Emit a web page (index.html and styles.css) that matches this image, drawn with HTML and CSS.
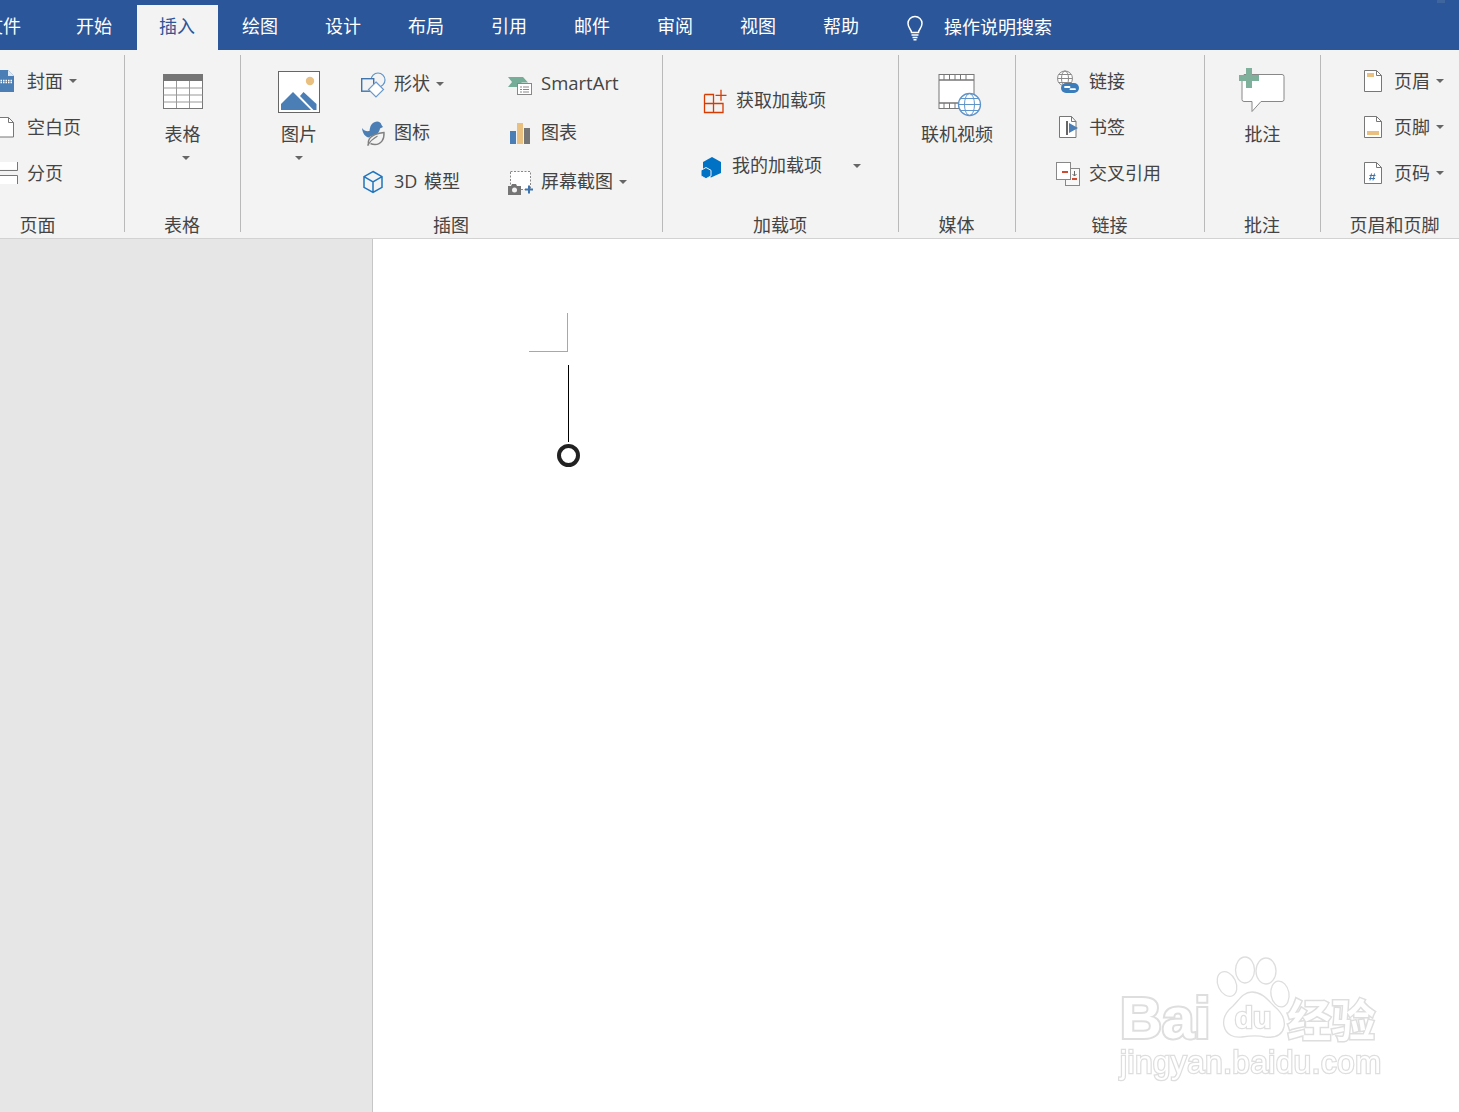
FILE: index.html
```html
<!DOCTYPE html>
<html lang="zh-CN">
<head>
<meta charset="utf-8">
<title>Word 插入</title>
<link rel="stylesheet" href="styles.css">
</head>
<body>
<div class="app">
  <nav class="tabs">
    <span class="tab tab-file">文件</span>
    <span class="tab">开始</span>
    <span class="tab tab-active">插入</span>
    <span class="tab">绘图</span>
    <span class="tab">设计</span>
    <span class="tab">布局</span>
    <span class="tab">引用</span>
    <span class="tab">邮件</span>
    <span class="tab">审阅</span>
    <span class="tab">视图</span>
    <span class="tab">帮助</span>
    <span class="search">
      <svg class="bulb" viewBox="0 0 20 26"><path d="M6.500 17.500c0-3-3.500-4.500-3.500-9a7 7 0 0 1 14 0c0 4.500-3.500 6-3.500 9z" fill="none" stroke="#fff" stroke-width="1.500"/><path d="M6.500 20h7M7.500 22.500h5M8.500 24.800h3" stroke="#fff" stroke-width="1.500" fill="none"/></svg>
      <span class="search-text">操作说明搜索</span>
    </span>
    <i class="corner-dot"></i>
  </nav>

  <div class="ribbon">
    <section class="group g-pages">
      <div class="body stack">
        <div class="item"><svg class="ico ico-28" viewBox="0 0 28 24"><path d="M2 1h16l6 6v16H2z" fill="#4a7eb5"/><path d="M18 1l6 6h-6z" fill="#dfe9f3"/><path d="M8 11.500h14M8 13.500h14" stroke="#fff" stroke-width="1.500" stroke-dasharray="1.500 1"/></svg><span>封面</span><i class="caret caret-inline"></i></div>
        <div class="item"><svg class="ico ico-28" viewBox="0 0 28 24"><path d="M2 2.500h16.500l5 5v14.500H2z" fill="#fff" stroke="#777"/><path d="M18.500 2.500v5h5" fill="none" stroke="#777"/></svg><span>空白页</span></div>
        <div class="item"><svg class="ico ico-28" viewBox="0 0 28 24"><path d="M0 1h27v7.500H0zM0 15h27v8H0z" fill="#fff"/><path d="M0 9.500h27.500V1M0 14.500h27.500V23" fill="none" stroke="#777"/></svg><span>分页</span></div>
      </div>
      <div class="label">页面</div>
    </section>

    <section class="group g-table">
      <div class="body center">
        <div class="large">
          <svg class="ico-large" viewBox="0 0 42 42"><rect x="1.500" y="3.500" width="39" height="34" fill="#fff" stroke="#777"/><rect x="1" y="3" width="40" height="7" fill="#757575"/><path d="M1.500 17h39M1.500 24h39M1.500 31h39M14.500 10v27M27.500 10v27" stroke="#999" fill="none"/></svg>
          <span>表格</span><i class="caret caret-table"></i>
        </div>
      </div>
      <div class="label">表格</div>
    </section>

    <section class="group g-illus">
      <div class="body row">
        <div class="large large-pic">
          <svg class="ico-large" viewBox="0 0 42 42"><rect x="0.500" y="0.500" width="41" height="41" fill="#fff" stroke="#666"/><circle cx="32" cy="10" r="4.200" fill="#e9c07f"/><path d="M3 39v-6l12-12 11 11 7 7z" fill="#4a7eb5"/><path d="M22 25l3.500-4 13 12v6h-3z" fill="#4a7eb5"/></svg>
          <span>图片</span><i class="caret"></i>
        </div>
        <div class="col col-a">
          <div class="item item-tall"><svg class="ico" viewBox="0 0 24 24"><circle cx="17" cy="8" r="7" fill="#f3f3f3" stroke="#5f94c9" stroke-width="1.200"/><rect x="0.700" y="6.700" width="12" height="12.500" fill="#f3f3f3" stroke="#3f74ad" stroke-width="1.400"/><path d="M15 10l7.500 7.500L15 25l-7.500-7.500z" fill="#fff" stroke="#6a9acb" stroke-width="1.200"/></svg><span>形状</span><i class="caret caret-inline"></i></div>
          <div class="item item-tall"><svg class="ico" viewBox="0 0 24 24"><path d="M1 7c2 3 5 3.500 7.500 3 .5-4 1.500-9 7.500-9.500 2.500 0 4 1.500 4.500 3.500l1.500 2-3 1.500c-.5 4-4 7.500-9 7.500l-2 1.500C4 16 1.500 12 1 7z" fill="#4a7eb5"/><path d="M7.500 24.500c-1-6 1-11 15.500-13 .5 7-3 12-9 12-2 0-3.500-.5-4.500-1" fill="#f3f3f3" stroke="#808080" stroke-width="1.400"/><path d="M6.500 24.500c2.500-4 5.500-7 10-9.500" fill="none" stroke="#808080" stroke-width="1.200"/></svg><span>图标</span></div>
          <div class="item item-tall"><svg class="ico" viewBox="0 0 24 24"><path d="M12 1.500l9 5.200v10.600l-9 5.200-9-5.200V6.700zM3 6.700l9 5.300 9-5.300M12 12v10.500" fill="none" stroke="#1f75bf" stroke-width="1.500"/></svg><span class="spaced">3D 模型</span></div>
        </div>
        <div class="col col-b">
          <div class="item item-tall"><svg class="ico ico-b" viewBox="0 0 25 24"><path d="M1 5h15l5 5.500h-6.500V15H1l4-5z" fill="#75ad98"/><rect x="10.500" y="11.500" width="14" height="11" fill="#fff" stroke="#888"/><path d="M13 15h2M16 15h6M13 17.500h2M16 17.500h6M13 20h2M16 20h6" stroke="#888"/></svg><span class="latin">SmartArt</span></div>
          <div class="item item-tall"><svg class="ico ico-b" viewBox="0 0 25 24"><rect x="3" y="10" width="6" height="13" fill="#4a7eb5"/><rect x="10" y="2" width="6" height="21" fill="#e9c07f"/><rect x="17" y="7" width="6" height="16" fill="#757575"/></svg><span>图表</span></div>
          <div class="item item-tall"><svg class="ico ico-b" viewBox="0 0 25 24"><rect x="3.500" y="1.500" width="20" height="18" fill="#fff" stroke="#888" stroke-dasharray="2 1.500"/><path d="M1 16h3l1-2h4l1 2h4v9H1z" fill="#757575"/><circle cx="7.500" cy="20" r="2.500" fill="#f3f3f3"/><path d="M22 15.500v8M18 19.500h8" stroke="#3f74ad" stroke-width="2"/></svg><span>屏幕截图</span><i class="caret caret-inline"></i></div>
        </div>
      </div>
      <div class="label">插图</div>
    </section>

    <section class="group g-addins">
      <div class="body stack">
        <div class="item item-addin item-get"><svg class="ico" viewBox="0 0 24 24"><path d="M1.500 5.500h9v9M1.500 5.500v18h18.500v-9H1.500M10.500 14.500v9M18 .8v11M12.500 6.300h11" fill="none" stroke="#d83b01" stroke-width="1.300"/></svg><span>获取加载项</span></div>
        <div class="item item-addin item-mine"><svg class="ico" viewBox="0 0 24 24"><path d="M12 3l9 5v11l-10 4.500-8-4.500V8z" fill="#0072c6"/><path d="M6 13.500l5 2.800v5.600L6 24.700 1 21.900v-5.600z" fill="#0072c6" stroke="#f3f3f3"/></svg><span>我的加载项</span><i class="caret caret-far"></i></div>
      </div>
      <div class="label">加载项</div>
    </section>

    <section class="group g-media">
      <div class="body center">
        <div class="large">
          <svg class="ico-large ico-wide" viewBox="0 0 50 42"><rect x="7" y="3.500" width="35" height="34" fill="#fff" stroke="#777"/><path d="M7 9h35M7 32h35" stroke="#777" stroke-width="1.500"/><path d="M12 3.500V9M17.500 3.500V9M23 3.500V9M28.500 3.500V9M34 3.500V9M12 32v5.500M17.500 32v5.500M23 32v5.500M28.500 32v5.500" stroke="#777"/><circle cx="37.500" cy="33.500" r="11" fill="#fff" stroke="#5f94c9" stroke-width="1.300"/><ellipse cx="37.500" cy="33.500" rx="5" ry="11" fill="none" stroke="#5f94c9"/><path d="M26.500 33.500h22M28 27.500h19M28 39.500h19" stroke="#5f94c9"/></svg>
          <span>联机视频</span>
        </div>
      </div>
      <div class="label">媒体</div>
    </section>

    <section class="group g-links">
      <div class="body stack">
        <div class="item"><svg class="ico" viewBox="0 0 24 24"><circle cx="9" cy="9.500" r="7.500" fill="#fff" stroke="#8a8a8a"/><ellipse cx="9" cy="9.500" rx="3.500" ry="7.500" fill="none" stroke="#8a8a8a"/><path d="M1.500 9.500h15M2.500 5.500h13M2.500 13.500h13" stroke="#8a8a8a"/><rect x="5" y="14" width="18" height="10" rx="5" fill="#3b7dbb"/><path d="M9 18h4.500M14.500 20.200H19" fill="none" stroke="#fff" stroke-width="1.800" stroke-linecap="round"/></svg><span>链接</span></div>
        <div class="item"><svg class="ico" viewBox="0 0 24 24"><path d="M3.500 1.500h12l4.500 5v16H3.500z" fill="#fff" stroke="#777"/><path d="M15.500 1.500v5h4.500" fill="none" stroke="#777"/><rect x="10" y="6" width="2" height="14" fill="#666"/><path d="M13 8l9 5-9 5z" fill="#4a7eb5"/></svg><span>书签</span></div>
        <div class="item"><svg class="ico" viewBox="0 0 24 24"><rect x="9.500" y="7.500" width="14" height="17" fill="#f8f8f8" stroke="#888"/><rect x="0.500" y="1.500" width="14" height="17" fill="#fff" stroke="#888"/><rect x="6" y="10" width="6" height="2" fill="#d1492e"/><rect x="16" y="17" width="5" height="2" fill="#d1492e"/><path d="M18.500 10v5M16.500 13l2 2 2-2" fill="none" stroke="#666"/></svg><span>交叉引用</span></div>
      </div>
      <div class="label">链接</div>
    </section>

    <section class="group g-comment">
      <div class="body center">
        <div class="large">
          <svg class="ico-large ico-wide" viewBox="0 0 50 42"><path d="M6 3.500h38a2 2 0 0 1 2 2v23a2 2 0 0 1-2 2H23l-9 10v-10H6a2 2 0 0 1-2-2v-23z" fill="#fff" stroke="#888"/><path d="M8-3h6v7h7v6h-7v7H8v-7H1V4h7z" fill="#7fb09b"/></svg>
          <span>批注</span>
        </div>
      </div>
      <div class="label">批注</div>
    </section>

    <section class="group g-header">
      <div class="body stack">
        <div class="item"><svg class="ico ico-page" viewBox="0 0 20 24"><path d="M1.500 1.500h12l5 5v16h-17z" fill="#fff" stroke="#777"/><path d="M13.500 1.500v5h5" fill="none" stroke="#777"/><rect x="4" y="4" width="7" height="4" fill="#e9c07f"/></svg><span>页眉</span><i class="caret caret-inline"></i></div>
        <div class="item"><svg class="ico ico-page" viewBox="0 0 20 24"><path d="M1.500 1.500h12l5 5v16h-17z" fill="#fff" stroke="#777"/><path d="M13.500 1.500v5h5" fill="none" stroke="#777"/><rect x="4" y="16" width="12" height="4" fill="#e9c07f"/></svg><span>页脚</span><i class="caret caret-inline"></i></div>
        <div class="item"><svg class="ico ico-page" viewBox="0 0 20 24"><path d="M1.500 1.500h12l5 5v16h-17z" fill="#fff" stroke="#777"/><path d="M13.500 1.500v5h5" fill="none" stroke="#777"/><path d="M8.500 12.500l-1.500 7M11.500 12.500l-1.500 7M6.500 14.500h6M6 17.500h6" stroke="#3f74ad" fill="none"/></svg><span>页码</span><i class="caret caret-inline"></i></div>
      </div>
      <div class="label">页眉和页脚</div>
    </section>
  </div>

  <main class="workspace">
    <aside class="side"></aside>
    <div class="page">
      <div class="margin-mark"></div>
      <div class="stem"></div>
      <div class="handle"></div>
    </div>
    <div class="watermark">
      <div class="wm-top">
        <span class="wm-bai">Bai</span>
        <svg class="wm-paw" viewBox="0 0 70 86">
          <g fill="#fff" stroke="#dedede" stroke-width="1.300">
            <ellipse cx="11" cy="27" rx="9" ry="13" transform="rotate(-25 11 27)"/>
            <ellipse cx="29" cy="13" rx="9.500" ry="13"/>
            <ellipse cx="50" cy="14" rx="10" ry="13"/>
            <ellipse cx="64" cy="37" rx="9" ry="13" transform="rotate(-10 64 37)"/>
            <path d="M36 35c-9 0-13 8-19 14-6 5-11 11-9 20 2 9 10 12 18 11 7-1 15-2 23 0 9 1 17-1 19-10 2-9-4-16-10-21-6-6-12-14-22-14z"/>
          </g>
          <text x="37" y="71" text-anchor="middle" class="wm-du">du</text>
        </svg>
        <span class="wm-jy">经验</span>
      </div>
      <div class="wm-url">jingyan.baidu.com</div>
    </div>
  </main>
</div>
</body>
</html>
```
FILE: styles.css
```css
* { box-sizing: border-box; }
html, body { margin: 0; padding: 0; height: 100%; overflow: hidden; background: #fff; }
body { font-family: "Noto Sans CJK SC", "Noto Sans", sans-serif; font-size: 18px; color: #444; }
.app { display: flex; flex-direction: column; height: 1112px; width: 1459px; overflow: hidden; }

.tabs { position: relative; display: flex; align-items: flex-end; gap: 2px; height: 50px; margin-left: -37.5px; background: #2b579a; color: #fff; flex: none; width: 1497px; }
.tab { display: flex; align-items: center; justify-content: center; width: 81px; height: 45px; padding-bottom: 4px; line-height: 41px; }
.tab-file { margin-right: 8px; }
.tab-active { background: #f3f3f3; color: #2b579a; }
.search { display: flex; align-items: center; height: 45px; margin-left: 21.5px; gap: 19px; }
.search-text { margin-bottom: 4px; }
.bulb { width: 20px; height: 26px; flex: none; }
.corner-dot { position: absolute; right: 15px; top: 0; width: 8px; height: 3px; background: #3f659e; }

.ribbon { display: flex; height: 189px; flex: none; padding-top: 5px; background: #f3f3f3; border-bottom: 1px solid #d2d2d2; overflow: hidden; }
.group { display: flex; flex-direction: column; flex: none; height: 177px; border-right: 1px solid #b9b9b9; }
.body { flex: 1; min-height: 0; }
.label { height: 20px; margin-bottom: -13px; padding-right: 1px; line-height: 20px; text-align: center; transform: translateY(-11px); color: #444; white-space: nowrap; }

.g-pages { width: 173px; margin-left: -48px; }
.g-table { width: 116px; }
.g-illus { width: 422px; }
.g-addins { width: 236px; }
.g-media { width: 117px; }
.g-links { width: 189px; }
.g-comment { width: 116px; }
.g-header { width: 148px; border-right: 0; }

.stack { display: flex; flex-direction: column; padding-top: 3px; }
.center { display: flex; justify-content: center; }
.row { display: flex; }
.col { display: flex; flex-direction: column; padding-top: 4px; }

.item { display: flex; align-items: center; height: 46px; white-space: nowrap; flex: none; }
.item > span { margin-top: -3px; }
.item-tall { height: 49px; }
.ico { display: block; width: 24px; height: 24px; flex: none; margin-right: 9px; overflow: visible; }
.ico-28 { width: 28px; }
.ico-b { width: 25px; }
.ico-page { width: 20px; margin-right: 11px; }

.g-pages .stack { padding-left: 38px; }
.g-links .stack { padding-left: 40px; }
.g-header .stack { padding-left: 42px; }

.large { display: flex; flex-direction: column; align-items: center; padding-top: 16px; line-height: 24px; }
.ico-large { display: block; width: 42px; height: 42px; margin-bottom: 8px; overflow: visible; flex: none; }
.ico-wide { width: 50px; }
.large-pic { width: 84px; margin-left: 16px; }

.col-a { width: 146px; margin-left: 20px; }

.g-addins .stack { padding: 13px 0 0 40px; }
.item-addin { height: 65px; }
.item-mine { margin-left: -3px; }
.item-mine .ico { margin-right: 8px; }

.caret { display: block; width: 0; height: 0; margin-top: 11px; border-top: 4px solid #666; border-left: 4px solid transparent; border-right: 4px solid transparent; }
.caret-table { margin-left: 6px; }
.caret-inline { margin: 0 0 0 6px; }
.caret-far { margin: 0 0 0 31px; }

.latin { font-family: "Open Sans", "Noto Sans", sans-serif; font-size: 18.500px; }
.spaced { font-family: "Open Sans", "Noto Sans CJK SC", sans-serif; word-spacing: 2px; }

.workspace { position: relative; display: flex; flex: 1; min-height: 0; }
.side { width: 373px; flex: none; background: #e6e6e6; border-right: 1px solid #c6c6c6; }
.page { flex: 1; background: #fff; padding: 74px 0 0 156px; }
.margin-mark { width: 39px; height: 39px; border-right: 1px solid #a8a8a8; border-bottom: 1px solid #a8a8a8; }
.stem { width: 1px; height: 77px; margin: 13px 0 0 39px; background: #000; }
.handle { width: 23px; height: 23px; margin: 2px 0 0 28px; border: 4px solid #222; border-radius: 50%; background: #fff; }

.watermark { position: absolute; left: 1120px; top: 718px; width: 264px; font-family: "Liberation Sans", sans-serif; color: #fff; filter: blur(0.3px); }
.wm-top { display: flex; align-items: flex-end; height: 86px; }
.wm-bai { font-size: 58px; font-weight: 700; line-height: 50px; letter-spacing: 0; paint-order: stroke fill; -webkit-text-stroke: 4px #dedede; }
.wm-paw { width: 82px; height: 86px; margin-left: 0; margin-right: -5px; flex: none; overflow: visible; }
.wm-du { font-family: "Liberation Sans", sans-serif; font-size: 30px; font-weight: 700; fill: #fff; stroke: #dedede; stroke-width: 2.500; paint-order: stroke fill; }
.wm-jy { font-family: "Noto Sans CJK SC", sans-serif; font-weight: 700; font-size: 44px; line-height: 50px; paint-order: stroke fill; -webkit-text-stroke: 3px #dedede; }
.wm-url { margin-top: 2px; font-size: 31px; line-height: 36px; letter-spacing: 0.700px; white-space: nowrap; paint-order: stroke fill; -webkit-text-stroke: 2.500px #dedede; }
```
